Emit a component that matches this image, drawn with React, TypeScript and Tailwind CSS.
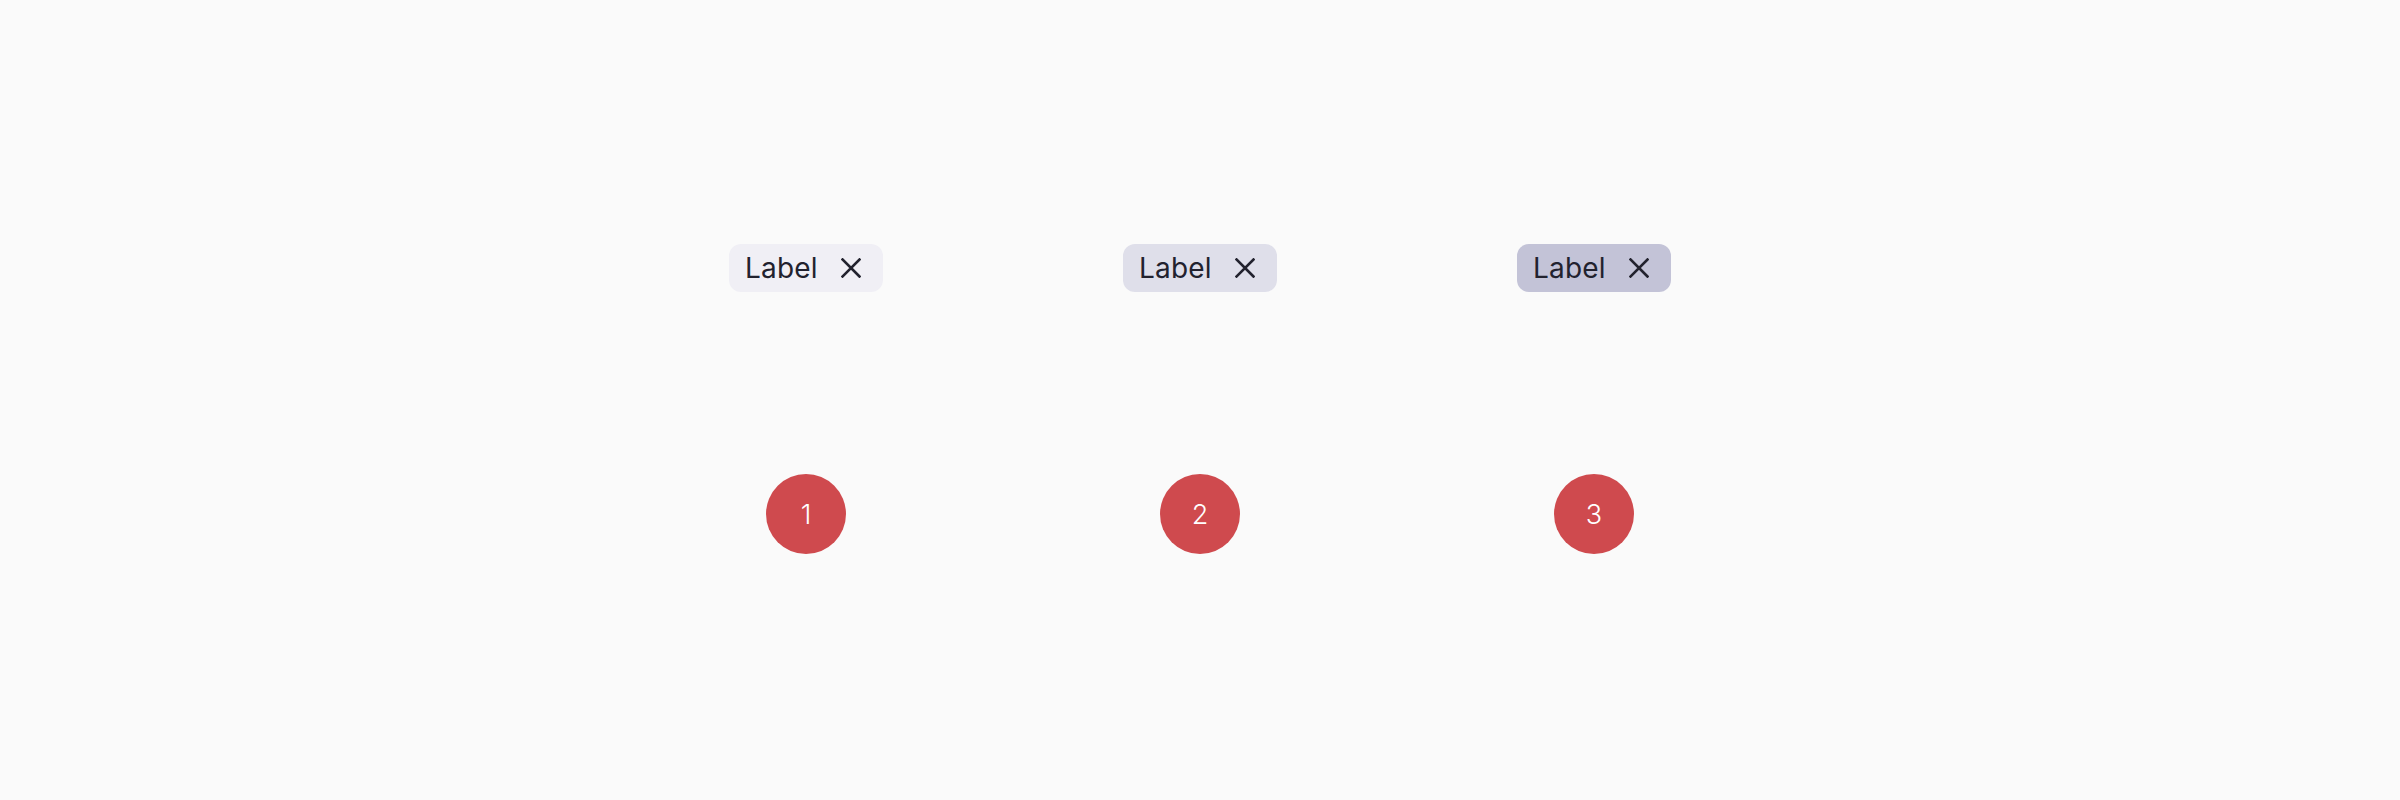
import React from "react";

const chipBgs = ["bg-[#f0eff5]", "bg-[#dfdfea]", "bg-[#c3c3d7]"];

function Chip({ bg }: { bg: string }) {
  return (
    <div
      className={`flex h-[48px] w-[154px] items-center justify-between rounded-[12px] pl-[16px] pr-[22px] ${bg}`}
    >
      <span className="text-[28px] leading-none text-[#22222e] tracking-[0.2px]" style={{ fontFamily: "Inter, 'Liberation Sans', sans-serif" }}>
        Label
      </span>
      <svg width="20" height="20" viewBox="0 0 20 20" fill="none">
        <path d="M1.5 1.5 L18.5 18.5 M18.5 1.5 L1.5 18.5" stroke="#22222e" strokeWidth="2.6" strokeLinecap="square" />
      </svg>
    </div>
  );
}

function Badge({ n }: { n: number }) {
  return (
    <div className="flex h-[80px] w-[80px] items-center justify-center rounded-full bg-[#cf4a4e]">
      <span className="text-[27px] font-light leading-none text-white" style={{ fontFamily: "Inter, 'Liberation Sans', sans-serif" }}>
        {n}
      </span>
    </div>
  );
}

export default function App() {
  return (
    <div className="flex h-[800px] w-full justify-center bg-[#fafafa] pt-[244px]">
      {[0, 1, 2].map((i) => (
        <div key={i} className="flex w-[394px] flex-col items-center gap-[182px]">
          <Chip bg={chipBgs[i]} />
          <Badge n={i + 1} />
        </div>
      ))}
    </div>
  );
}
